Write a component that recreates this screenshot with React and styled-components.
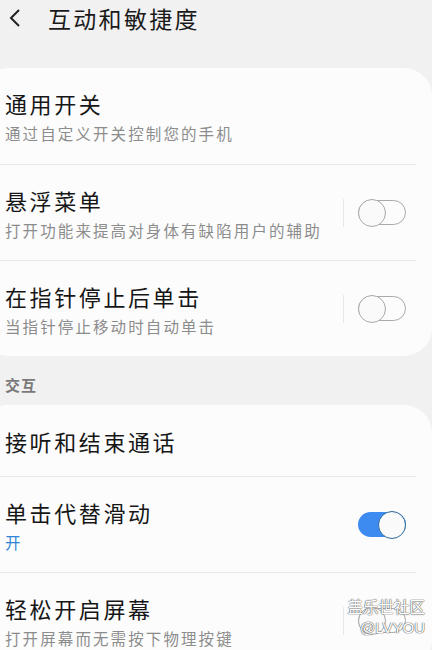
import React from "react";
import styled, { createGlobalStyle } from "styled-components";

const GlobalStyle = createGlobalStyle`
  html, body {
    margin: 0;
    padding: 0;
    background: #f1f1f1;
    font-family: "Noto Sans CJK SC", "Noto Sans", sans-serif;
    overflow: hidden;
  }
`;

const Page = styled.div`
  position: relative;
  width: 432px;
  height: 650px;
  overflow: hidden;
  background: #f1f1f1;
`;

const Header = styled.div`
  display: flex;
  align-items: flex-start;
  height: 68px;
  padding: 2px 0 0 8px;
  box-sizing: border-box;
  gap: 26px;
`;

const Back = styled.div`
  display: flex;
  align-items: center;
  height: 32px;
`;

const Title = styled.h1`
  margin: 0;
  font-size: 23px;
  font-weight: 400;
  line-height: 32px;
  letter-spacing: 2.3px;
  color: #1a1a1a;
`;

const Card = styled.div`
  background: #fcfcfc;
  border-radius: 28px;
  margin-left: -20px;
  padding-left: 20px;
  overflow: hidden;
`;

const Row = styled.div`
  display: flex;
  align-items: center;
  height: ${(p) => (p.$single ? 71 : 96)}px;
  padding-left: 5px;
  margin-right: 16px;
  border-top: ${(p) => (p.$first ? "none" : "1px solid #e6e6e6")};
  box-sizing: border-box;
`;

const Texts = styled.div`
  flex: 1;
  display: flex;
  flex-direction: column;
  gap: 4px;
`;

const ItemTitle = styled.div`
  font-size: 22px;
  line-height: 30px;
  letter-spacing: 2.6px;
  color: #161616;
`;

const Sub = styled.div`
  font-size: 15.5px;
  line-height: 22px;
  letter-spacing: 2.1px;
  color: ${(p) => (p.$on ? "#2f86d6" : "#8c8c8c")};
`;

const SwitchArea = styled.div`
  display: flex;
  align-items: center;
  gap: 14px;
  margin-right: 10px;
`;

const Sep = styled.div`
  width: 1px;
  height: 28px;
  background: #e8e8e8;
`;

const Track = styled.div`
  position: relative;
  width: 48px;
  height: 25px;
  border-radius: 13px;
  box-sizing: border-box;
  border: ${(p) => (p.$on ? "none" : "1.5px solid #a9a9a9")};
  background: ${(p) => (p.$on ? "#3d8bf0" : "transparent")};
`;

const Knob = styled.div`
  position: absolute;
  top: 50%;
  left: ${(p) => (p.$on ? "20px" : "-1.5px")};
  width: 28px;
  height: 28px;
  margin-top: -14px;
  border-radius: 50%;
  box-sizing: border-box;
  background: #fafafa;
  border: 1.5px solid ${(p) => (p.$on ? "#2b6a9c" : "#a9a9a9")};
`;

const Section = styled.div`
  padding: 18px 0 9px 5px;
  font-size: 15px;
  line-height: 22px;
  font-weight: 700;
  color: #7a7a7a;
  letter-spacing: 1px;
`;

const Watermark = styled.div`
  position: absolute;
  right: 7px;
  bottom: 12px;
  display: flex;
  flex-direction: column;
  align-items: flex-end;
  font-family: "Liberation Sans", "Noto Sans CJK SC", sans-serif;
  color: #ffffff;
  text-shadow: 0 0 1px #666, 0 0 1px #666, 0 0 1px #666;
  line-height: 20px;
`;

const WmBig = styled.div`
  font-size: 15.5px;
`;

const WmSmall = styled.div`
  font-size: 15px;
`;

function Toggle({ on, sep = true }) {
  return (
    <SwitchArea>
      {sep && <Sep />}
      <Track $on={on}>
        <Knob $on={on} />
      </Track>
    </SwitchArea>
  );
}

function Item({ title, sub, on, toggle, first, single }) {
  return (
    <Row $first={first} $single={single}>
      <Texts>
        <ItemTitle>{title}</ItemTitle>
        {sub && <Sub $on={on && sub === "开"}>{sub}</Sub>}
      </Texts>
      {toggle && <Toggle on={on} sep={!on} />}
    </Row>
  );
}

export default function App() {
  return (
    <Page>
      <GlobalStyle />
      <Header>
        <Back>
          <svg width="14" height="20" viewBox="0 0 14 20">
            <path d="M11 2 L3 10 L11 18" fill="none" stroke="#222" strokeWidth="2" />
          </svg>
        </Back>
        <Title>互动和敏捷度</Title>
      </Header>
      <Card>
        <Item first title="通用开关" sub="通过自定义开关控制您的手机" />
        <Item title="悬浮菜单" sub="打开功能来提高对身体有缺陷用户的辅助" toggle />
        <Item title="在指针停止后单击" sub="当指针停止移动时自动单击" toggle />
      </Card>
      <Section>交互</Section>
      <Card>
        <Item first single title="接听和结束通话" />
        <Item title="单击代替滑动" sub="开" toggle on />
        <Item title="轻松开启屏幕" sub="打开屏幕而无需按下物理按键" toggle />
      </Card>
      <Watermark>
        <WmBig>盖乐世社区</WmBig>
        <WmSmall>@LVYOU</WmSmall>
      </Watermark>
    </Page>
  );
}
